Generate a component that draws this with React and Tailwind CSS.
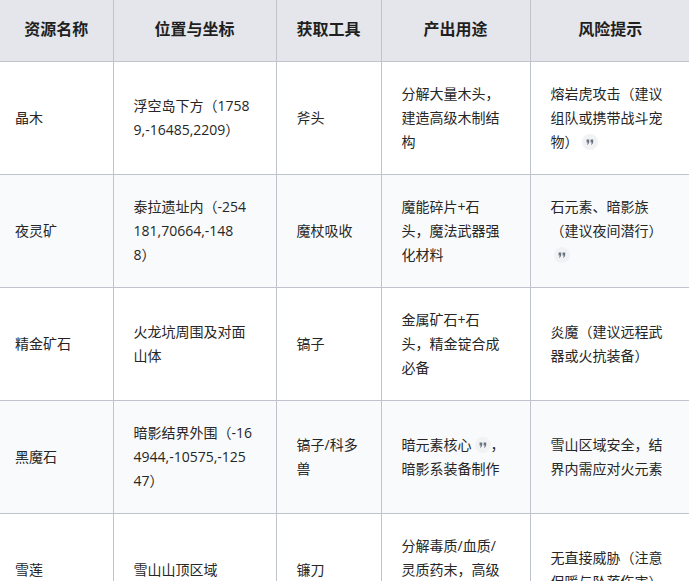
import React from 'react';

// 引用角标：浅灰圆底 + 右双引号
const Quote = () => (
  <span className="inline-flex items-center justify-center w-4 h-4 rounded-full bg-[#f1f2f4] align-middle ml-[3px] mb-[2px]">
    <svg width="8" height="6" viewBox="0 0 8 6" className="text-[#6b7280]" fill="currentColor">
      <path d="M0.6 0.4h2.6v2.4c0 1.4-0.7 2.4-2 2.9l-0.3-0.6c0.7-0.4 1-0.9 1-1.6H0.6z" />
      <path d="M4.6 0.4h2.6v2.4c0 1.4-0.7 2.4-2 2.9l-0.3-0.6c0.7-0.4 1-0.9 1-1.6H4.6z" />
    </svg>
  </span>
);

const rows = [
  {
    name: '晶木',
    loc: '浮空岛下方（17589,-16485,2209）',
    tool: '斧头',
    use: '分解大量木头，建造高级木制结构',
    risk: <>熔岩虎攻击（建议组队或携带战斗宠物）<Quote /></>,
  },
  {
    name: '夜灵矿',
    loc: '泰拉遗址内（-254181,70664,-1488）',
    tool: '魔杖吸收',
    use: '魔能碎片+石头，魔法武器强化材料',
    risk: <>石元素、暗影族（建议夜间潜行）<Quote /></>,
  },
  {
    name: '精金矿石',
    loc: '火龙坑周围及对面山体',
    tool: '镐子',
    use: '金属矿石+石头，精金锭合成必备',
    risk: '炎魔（建议远程武器或火抗装备）',
  },
  {
    name: '黑魔石',
    loc: '暗影结界外围（-164944,-10575,-12547）',
    tool: '镐子/科多兽',
    use: <>暗元素核心<Quote />，暗影系装备制作</>,
    risk: '雪山区域安全，结界内需应对火元素',
  },
  {
    name: '雪莲',
    loc: '雪山山顶区域',
    tool: '镰刀',
    use: '分解毒质/血质/灵质药末，高级药剂原料',
    risk: '无直接威胁（注意保暖与坠落伤害）',
  },
];

const heads = ['资源名称', '位置与坐标', '获取工具', '产出用途', '风险提示'];

export default function App() {
  return (
    <div
      className="w-[689px] h-[581px] overflow-hidden bg-white [text-spacing-trim:space-all]"
      style={{ fontFamily: '"Open Sans", "Noto Sans CJK SC", sans-serif' }}
    >
      <table className="table-fixed border-collapse w-[690px] text-[14px] text-[#262626]">
        <colgroup>
          <col className="w-[113px]" />
          <col className="w-[163px]" />
          <col className="w-[105px]" />
          <col className="w-[149px]" />
          <col className="w-[160px]" />
        </colgroup>
        <thead>
          <tr className="bg-[#e4e6eb]">
            {heads.map((h, i) => (
              <th
                key={h}
                className={`h-[61px] pb-[5px] text-[16px] font-bold text-[#1f1f1f] text-center border-b border-[#bfc3cc] ${i > 0 ? 'border-l' : ''}`}
                style={{ fontFamily: '"Noto Sans CJK SC", sans-serif' }}
              >
                {h}
              </th>
            ))}
          </tr>
        </thead>
        <tbody>
          {rows.map((r, i) => (
            <tr key={r.name} className={i % 2 === 1 ? 'bg-[#f9fafb]' : 'bg-white'}>
              <td className="pl-[15px] pr-5 py-5 leading-6 align-middle border-b border-[#bfc3cc] break-all">{r.name}</td>
              <td className="pl-5 pr-[23px] py-5 leading-6 align-middle border-b border-l border-[#bfc3cc] break-all">{r.loc}</td>
              <td className="px-5 py-5 leading-6 align-middle border-b border-l border-[#bfc3cc] break-all">{r.tool}</td>
              <td className="pl-5 pr-[24px] py-5 leading-6 align-middle border-b border-l border-[#bfc3cc] break-all">{r.use}</td>
              <td className="px-5 py-5 leading-6 align-middle border-b border-l border-[#bfc3cc] break-all">{r.risk}</td>
            </tr>
          ))}
        </tbody>
      </table>
    </div>
  );
}
